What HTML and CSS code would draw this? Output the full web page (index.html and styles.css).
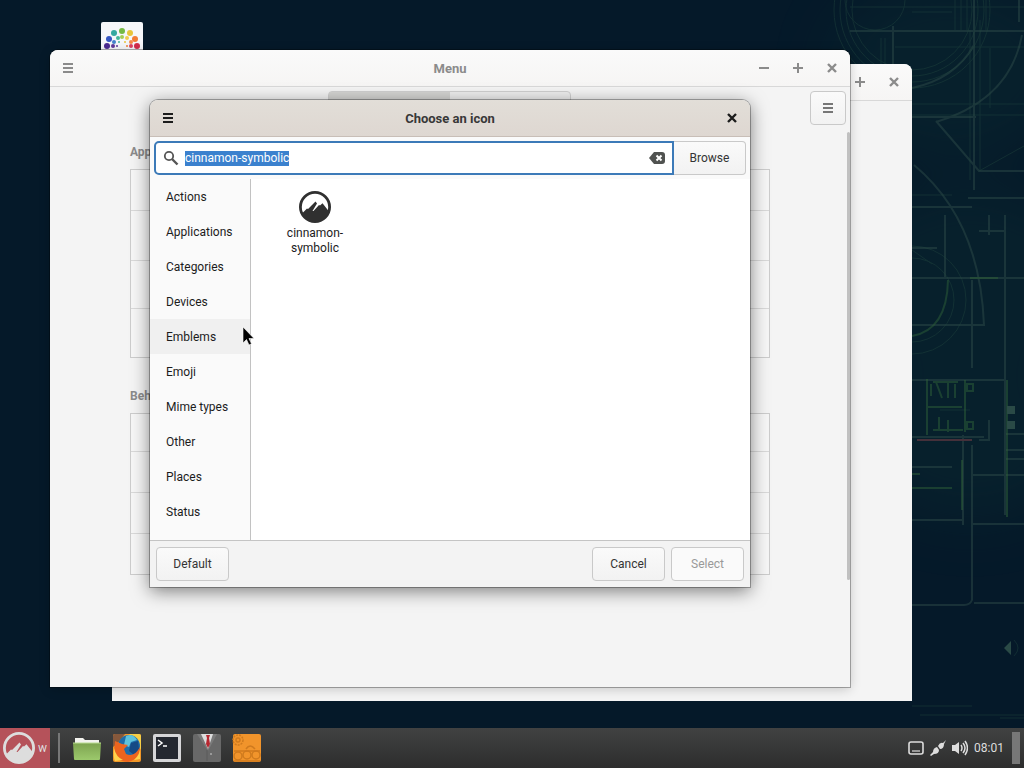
FILE: index.html
```html
<!DOCTYPE html>
<html lang="en">

<head>
  <meta charset="UTF-8">
  <meta name="viewport" content="width=device-width, initial-scale=1.0">
  <title>Choose an icon</title>
  <link rel="stylesheet" href="styles.css">
</head>

<body>
  <!-- shared icons -->
  <svg class="sprite" aria-hidden="true">
    <symbol id="bars" viewBox="0 0 16 16"><path d="M3 3h10v2H3zM3 7h10v2H3zM3 11h10v2H3z"/></symbol>
    <symbol id="close" viewBox="0 0 16 16"><path d="M4 4l8 8M12 4l-8 8" stroke="currentColor" stroke-width="2.4"/></symbol>
    <symbol id="plus" viewBox="0 0 16 16"><path d="M3 7h4V3h2v4h4v2H9v4H7V9H3z"/></symbol>
    <symbol id="minus" viewBox="0 0 16 16"><path d="M3 7h10v2H3z"/></symbol>
    <symbol id="cinnamon" viewBox="0 0 32 32">
      <circle cx="16" cy="16" r="14.6" fill="none" stroke="currentColor" stroke-width="2.8"/>
      <path d="M2.500 23L8 17.500l1 .5 7.500-7.500 1.500 2-4.500 7.500h1l5.500-6 1 .5 2.500-2.300L30 20.500C28 27 22 30.500 16 30.500S5 28 2.500 23z"/>
    </symbol>
  </svg>

  <main class="desktop">
    <svg class="wallpaper" viewBox="0 0 1024 728" preserveAspectRatio="xMaxYMin slice" aria-hidden="true">
      <g class="glow">
        <ellipse cx="950" cy="70" rx="120" ry="90"/>
        <ellipse cx="970" cy="285" rx="130" ry="100"/>
        <ellipse cx="970" cy="440" rx="110" ry="80"/>
      </g>
      <g class="lines">
        <path d="M850 31h174M893 26v38M974 0v190M1019 0v22M974 45Q955 79 912 88M1022 35Q1010 100 936 122M912 117h64M936 121l43 50h45"/>
        <path d="M914 165Q980 220 984 325H912M945 215v64M912 278h112M972 280v88M1005 215v300M912 207h60M968 198h56M912 380h92M912 437h72M972 445v155q-2 5-8 5h-52M973 524h51M974 603h50M963 435v90M912 520h50M973 475h51"/>
        <path d="M989 215v20M979 231h25M912 248h25M1006 434h18M1006 450h18M1006 459h18M912 467h40M979 440h10V420"/>
      </g>
      <g class="faint">
        <circle cx="912" cy="10" r="60"/><circle cx="912" cy="10" r="66"/><circle cx="912" cy="10" r="72"/><circle cx="912" cy="10" r="78"/>
        <circle cx="912" cy="300" r="54"/><circle cx="912" cy="300" r="42"/>
        <circle cx="875" cy="0" r="30"/>
        <path d="M850 7h174M895 47h129M912 104h112M979 171l45-25M912 115h112M912 195h40M912 250l20 14M980 20v150M970 30v150M912 12h40M990 48v60M940 410h30M920 715h104M912 706h60M1000 718h24"/>
        <path d="M967 0v30M961 0v30M955 0v30M986 0v30M881 38v26M885 38v26"/>
      </g>
      <g class="green">
        <path d="M948 280Q947 330 912 336M927 379v56M912 488h40M962 460v50M1007 380v137M928 407h34M965 380v52M933 382h25M933 430h30M912 474h8M970 278h28"/>
        <path d="M931 384v12M936 382l6 16M948 382v16M955 384v14M939 417v14M948 420v12M967 384h6v7h-6zM967 422h6v7h-6z"/>
      </g>
      <path class="red" d="M917 440h55"/>
      <path class="mark" d="M1007 406h8v8h-8zM1007 421h8v8h-8zM1004 648l7-7v14z"/>
      <path class="faint" d="M1014 640q8 8 0 16"/>
    </svg>

    <div class="desktop-icon">
      <svg viewBox="0 0 42 42">
        <circle cx="6" cy="24" r="3" fill="#4b2a91"/><circle cx="8" cy="17" r="3" fill="#3557c3"/>
        <circle cx="13" cy="11" r="3" fill="#35a9a0"/><circle cx="21" cy="9" r="3" fill="#75b943"/>
        <circle cx="29" cy="11" r="3" fill="#e8c53a"/><circle cx="34" cy="17" r="3" fill="#f27c35"/>
        <circle cx="36" cy="24" r="3" fill="#d32c4b"/>
        <circle cx="12" cy="24" r="2" fill="#60399b"/><circle cx="13" cy="20" r="2" fill="#4382cb"/>
        <circle cx="17" cy="16" r="2" fill="#44b999"/><circle cx="21" cy="15" r="2" fill="#a7ce51"/>
        <circle cx="26" cy="16" r="2" fill="#f2cc4e"/><circle cx="30" cy="20" r="2" fill="#f68a48"/>
        <circle cx="30" cy="24" r="2" fill="#dd425f"/>
        <circle cx="16" cy="24" r="1" fill="#60399b"/><circle cx="18" cy="20" r="1" fill="#44b999"/><circle cx="24" cy="20" r="1" fill="#e8c53a"/><circle cx="26" cy="24" r="1" fill="#f27c35"/>
      </svg>
    </div>

    <section class="window window-back">
      <header class="titlebar">
        <div class="controls">
          <button aria-label="Maximize"><svg><use href="#plus"/></svg></button>
          <button aria-label="Close"><svg><use href="#close"/></svg></button>
        </div>
      </header>
    </section>

    <section class="window window-menu">
      <header class="titlebar">
        <button aria-label="Window menu"><svg><use href="#bars"/></svg></button>
        <h1>Menu</h1>
        <div class="controls">
          <button aria-label="Minimize"><svg><use href="#minus"/></svg></button>
          <button aria-label="Maximize"><svg><use href="#plus"/></svg></button>
          <button aria-label="Close"><svg><use href="#close"/></svg></button>
        </div>
      </header>
      <div class="toolbar">
        <div class="switcher"><span class="active"></span><span></span></div>
        <button class="btn more" aria-label="More"><svg><use href="#bars"/></svg></button>
      </div>
      <div class="settings">
        <h2>Appearance</h2>
        <div class="panel panel-tall"><div></div><div></div><div></div><div></div></div>
        <h2>Behavior</h2>
        <div class="panel"><div></div><div></div><div></div><div></div></div>
      </div>
      <div class="scrollbar"></div>
    </section>

    <section class="window dialog" role="dialog" aria-labelledby="dialog-title">
      <header class="titlebar">
        <button aria-label="Window menu"><svg><use href="#bars"/></svg></button>
        <h1 id="dialog-title">Choose an icon</h1>
        <div class="controls">
          <button aria-label="Close"><svg><use href="#close"/></svg></button>
        </div>
      </header>
      <div class="search-row">
        <div class="search">
          <svg viewBox="0 0 16 16"><circle cx="6" cy="6" r="4.2" fill="none" stroke="#555" stroke-width="1.8"/><path d="M9 9l5.500 5.500" stroke="#555" stroke-width="2.4"/></svg>
          <input type="text" id="search" aria-label="Search icons" value="cinnamon-symbolic" spellcheck="false">
          <button aria-label="Clear">
            <svg viewBox="0 0 16 16"><path d="M5 2h8q3 0 3 3v6q0 3-3 3H5L0 8z" fill="#505250"/><path d="M7.500 5.500l5 5M12.500 5.500l-5 5" stroke="#fff" stroke-width="2"/></svg>
          </button>
        </div>
        <button class="btn browse">Browse</button>
      </div>
      <div class="chooser">
        <nav class="categories">
          <a href="#">Actions</a>
          <a href="#">Applications</a>
          <a href="#">Categories</a>
          <a href="#">Devices</a>
          <a href="#" class="hover">Emblems</a>
          <a href="#">Emoji</a>
          <a href="#">Mime types</a>
          <a href="#">Other</a>
          <a href="#">Places</a>
          <a href="#">Status</a>
        </nav>
        <div class="icons">
          <button class="icon-item">
            <svg><use href="#cinnamon"/></svg>
            <span>cinnamon-<br>symbolic</span>
          </button>
        </div>
      </div>
      <footer class="actions">
        <button class="btn">Default</button>
        <div class="actions-right">
          <button class="btn">Cancel</button>
          <button class="btn" disabled>Select</button>
        </div>
      </footer>
    </section>

    <svg class="cursor" viewBox="0 0 12 20" aria-hidden="true"><path d="M1 1v16l3.500-3.500L7 19l2.500-1.200L7 12.500h5z" fill="#000" stroke="#fff" stroke-width=".6"/></svg>
  </main>

  <footer class="taskbar">
    <button class="start"><svg><use href="#cinnamon"/></svg><span>w</span></button>
    <div class="separator"></div>
    <div class="launchers">
      <button aria-label="Files">
        <svg viewBox="0 0 30 30"><path d="M3 5h8l2 2h14v5H3z" fill="#f3f3ef"/><path d="M1 10h28l-1 16q0 1-1 1H3q-1 0-1-1z" fill="url(#folder)"/><path d="M1 10h28" stroke="#b9dc93"/>
          <defs><linearGradient id="folder" x1="0" y1="0" x2="0" y2="1"><stop offset="0" stop-color="#7da350"/><stop offset="1" stop-color="#9cc96c"/></linearGradient></defs></svg>
      </button>
      <button aria-label="Firefox">
        <svg viewBox="0 0 30 30"><rect x="1" y="1" width="28" height="28" rx="2" fill="#f19727"/><path d="M1 3q0-2 2-2h10L5 11l-4 3z" fill="#85583c"/><path d="M17 1h10q2 0 2 2v14L23 6z" fill="#f7ce45"/><circle cx="17" cy="13" r="11" fill="#1e6ca9"/><path d="M14 3q7-3 11 4l-6 2-2 5-5-2z" fill="#5ec2dc"/><path d="M19 10l7-2 1 8-5 6-5-4z" fill="#164a85"/><path d="M3 8l7 3 6 1-4 4 2 5q8 4 14-7-1 13-12 15Q4 29 2 18z" fill="#ed641e"/><path d="M2 15q2 9 9 12l-8 1q-2-4-1-13M28 13q1 8-6 14l6-1z" fill="#ffd34d"/></svg>
      </button>
      <button aria-label="Terminal">
        <svg viewBox="0 0 30 30"><rect x="1" y="1" width="28" height="28" rx="2" fill="#d6d6d8"/><rect x="4" y="4" width="22" height="22" fill="#242830"/><path d="M6 7l4 3-4 3M11 13h4" fill="none" stroke="#fff" stroke-width="1.5"/></svg>
      </button>
      <button aria-label="Butler">
        <svg viewBox="0 0 30 30"><rect x="1" y="1" width="28" height="28" rx="2" fill="#686868"/><path d="M5 1h20l-9 17z" fill="#7a7a7a"/><path d="M9 1h12l-5 15z" fill="#ddd"/><path d="M14 2h4l-1 3 1 6-2 4-2-4 1-6z" fill="#b62831"/><path d="M15 17v11" stroke="#5a5a5a"/><circle cx="19" cy="21" r="1" fill="#aaa"/></svg>
      </button>
      <button aria-label="Settings">
        <svg viewBox="0 0 30 30"><rect x="1" y="1" width="28" height="28" rx="2" fill="#f1942b"/><g fill="none" stroke="#cf7a1e" stroke-width="1.5"><circle cx="6" cy="7" r="5" stroke-dasharray="2 1"/><circle cx="6" cy="7" r="2"/><circle cx="6" cy="23" r="4"/><circle cx="15" cy="22" r="4"/><circle cx="24" cy="22" r="4"/><path d="M14 16q4-6 9 0M2 18h26M2 28h26"/></g></svg>
      </button>
    </div>
    <div class="tray">
      <svg viewBox="0 0 16 16"><rect x="1" y="2" width="14" height="12" rx="2" fill="none" stroke="currentColor" stroke-width="1.6"/><path d="M4 11h8" stroke="currentColor" stroke-width="1.2"/></svg>
      <svg viewBox="0 0 16 16"><path d="M0 15l3-3q0-4 4-5l2 3q0 4-5 4l-3 2zM8 6q2-4 5-3l3-3-2 4q0 5-4 5z" fill="currentColor"/></svg>
      <svg viewBox="0 0 16 16"><path d="M0 5h3l4-3v12l-4-3H0z" fill="currentColor"/><path d="M9 5q2 3 0 6M11 3q4 5 0 10M13 1q5 7 0 14" fill="none" stroke="currentColor" stroke-width="1.5"/></svg>
      <time>08:01</time>
      <button class="show-desktop" aria-label="Show desktop"></button>
    </div>
  </footer>

  <script>
    const search = document.querySelector("#search");
    search.focus();
    search.select();
  </script>
</body>
</html>
```
FILE: styles.css
```css
*,
*::before,
*::after {
	box-sizing: border-box;
}

body {
	display: flex;
	flex-direction: column;
	height: 100vh;
	margin: 0;
	overflow: hidden;
	background: #051929;
	color: #1c1c1c;
	font-family: Roboto, sans-serif;
	font-size: 12px;
	line-height: 15px;
}

button {
	padding: 0;
	border: 0;
	background: none;
	color: inherit;
	font: inherit;
}

h1, h2 {
	margin: 0;
	font-size: 13px;
	font-weight: bold;
}

svg {
	display: block;
	width: 16px;
	height: 16px;
	fill: currentColor;
}

.sprite {
	position: absolute;
	width: 0;
	height: 0;
}

.desktop {
	position: relative;
	flex: 1;
	overflow: hidden;
}

/* wallpaper */
.wallpaper {
	width: 100%;
	height: 100%;
	fill: none;
}

.glow {
	fill: #0b2c32;
	opacity: 0.4;
	filter: blur(28px);
}

.lines {
	stroke: #2d4a48;
	stroke-width: 2;
	opacity: 0.5;
}

.faint {
	stroke: #244a40;
	opacity: 0.4;
}

.green {
	stroke: #2e6038;
	stroke-width: 2;
	opacity: 0.5;
}

.red {
	stroke: #45303a;
	stroke-width: 2;
}

.mark {
	fill: #2a4a46;
}

.desktop-icon {
	position: absolute;
	top: 22px;
	left: 101px;
	border-radius: 2px;
	background: #f6f7fa;
}

.desktop-icon svg {
	width: 42px;
	height: 42px;
}

/* windows */
.window {
	position: absolute;
	display: flex;
	flex-direction: column;
	width: 800px;
	height: 637px;
	border-radius: 8px 8px 0 0;
	background: #f4f4f4;
}

.window-back {
	top: 64px;
	left: 112px;
	color: #8b8b8b;
}

.window-menu {
	top: 50px;
	left: 50px;
	color: #8b8b8b;
	box-shadow: 0 0 0 1px rgba(0, 0, 0, 0.3), 0 2px 12px rgba(0, 0, 0, 0.2);
}

.dialog {
	top: 100px;
	left: 150px;
	width: 600px;
	height: 487px;
	box-shadow: 0 0 0 1px rgba(0, 0, 0, 0.3), 0 4px 18px rgba(0, 0, 0, 0.5);
}

.titlebar {
	display: grid;
	grid-template-columns: 1fr auto 1fr;
	align-items: center;
	height: 37px;
	padding: 0 10px;
	border-bottom: 1px solid #d8d8d8;
	border-radius: 8px 8px 0 0;
	background: linear-gradient(#fafafa, #f6f5f4);
}

.dialog .titlebar {
	border-bottom-color: #c8beb7;
	background: linear-gradient(#e2ded8, #ded7d1);
}

.dialog h1 {
	color: #383838;
}

.controls {
	grid-column: 3;
	justify-self: end;
	display: flex;
	gap: 18px;
}

.toolbar {
	display: flex;
	justify-content: center;
	align-items: flex-start;
	height: 46px;
	padding: 4px;
}

.switcher {
	display: flex;
	width: 243px;
	height: 34px;
	margin-left: auto;
	border: 1px solid #d0d0d0;
	border-radius: 4px;
	background: #eee;
}

.switcher span {
	flex: 1;
}

.switcher .active {
	background: #d4d4d2;
}

.more {
	width: 36px;
	margin-left: 239px;
}

.more svg {
	margin: auto;
}

.settings {
	padding: 12px 80px 0;
}

.settings h2 {
	margin-bottom: 9px;
	font-size: 12px;
}

.panel {
	display: grid;
	grid-template-rows: 37px 41px 41px 1fr;
	height: 162px;
	margin-bottom: 31px;
	border: 1px solid #ccc;
	background: #f6f6f6;
}

.panel-tall {
	grid-template-rows: 40px 50px 48px 1fr;
	height: 189px;
}

.panel div + div {
	border-top: 1px solid #d9d9d9;
}

.scrollbar {
	position: absolute;
	top: 82px;
	right: 0;
	bottom: 107px;
	width: 3px;
	border-radius: 2px;
	background: #c0c0c0;
}

.btn {
	height: 34px;
	border: 1px solid #c9c9c9;
	border-radius: 4px;
	background: linear-gradient(#fafafa, #f2f2f2);
	color: #343434;
}

.btn.more {
	color: #777;
}

.btn:disabled {
	background: #fafafa;
	color: #999;
}

/* dialog */
.search-row {
	display: flex;
	padding: 4px;
	background: #fafafa;
}

.search {
	display: flex;
	flex: 1;
	align-items: center;
	gap: 6px;
	height: 34px;
	padding: 0 7px;
	border: 2px solid #3c7ab8;
	border-radius: 5px 0 0 5px;
	background: #fff;
}

.search input {
	flex: 1;
	min-width: 0;
	padding: 0;
	border: 0;
	outline: 0;
	background: none;
	color: #333;
	font: inherit;
}

.search input::selection {
	background: rgba(57, 128, 205, 0.99);
	color: #fff;
}

.browse {
	width: 72px;
	border-left: 0;
	border-radius: 0 4px 4px 0;
}

.chooser {
	display: flex;
	flex: 1;
	min-height: 0;
	background: #fff;
}

.categories {
	width: 101px;
	border-right: 1px solid #c2c2c2;
	background: #fafafa;
}

.categories a {
	display: block;
	padding: 11px 16px 9px;
	color: #1c1c1c;
	text-decoration: none;
}

.categories .hover {
	background: #f0f0f0;
}

.icons {
	flex: 1;
	padding: 12px 14px;
}

.icon-item {
	width: 100px;
}

.icon-item svg {
	width: 32px;
	height: 32px;
	margin: 0 auto 3px;
	color: #303030;
}

.actions {
	display: flex;
	justify-content: space-between;
	padding: 6px;
	border-top: 1px solid #c4c4c4;
	background: #f3f3f3;
}

.actions .btn {
	width: 73px;
}

.actions-right {
	display: flex;
	gap: 6px;
}

.cursor {
	position: absolute;
	top: 326px;
	left: 242px;
	width: 12px;
	height: 20px;
}

/* panel at the bottom */
.taskbar {
	display: flex;
	align-items: center;
	height: 40px;
	background: linear-gradient(#414242, #2d2d2d);
	color: #ddd;
}

.start {
	display: flex;
	align-items: center;
	gap: 3px;
	width: 50px;
	height: 40px;
	padding-left: 3px;
	background: #b5525a;
}

.start svg {
	width: 32px;
	height: 32px;
}

.separator {
	width: 2px;
	height: 30px;
	margin: 0 12px 0 8px;
	background: #777;
}

.launchers {
	display: flex;
	gap: 10px;
}

.launchers svg {
	width: 30px;
	height: 30px;
}

.tray {
	display: flex;
	align-items: center;
	gap: 6px;
	margin-left: auto;
	padding-right: 4px;
}

.show-desktop {
	width: 8px;
	height: 32px;
	margin-left: 2px;
	background: #777;
}
```
